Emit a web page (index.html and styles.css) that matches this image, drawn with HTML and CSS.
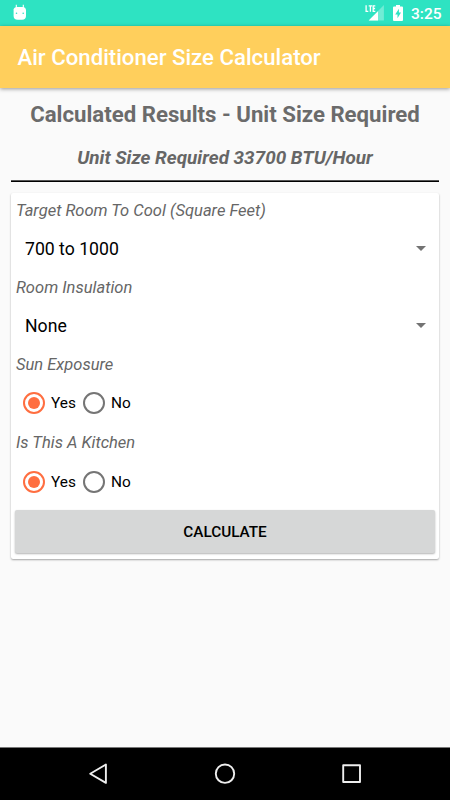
FILE: index.html
```html
<!DOCTYPE html>
<html lang="en">
<head>
<meta charset="utf-8">
<title>Air Conditioner Size Calculator</title>
<link rel="stylesheet" href="styles.css">
</head>
<body>
<div class="screen">
  <div class="status">
    <svg class="bot" width="14" height="17" viewBox="0 0 14 17">
      <path d="M3.3 4V.8M10.3 4V.8" stroke="#fff" stroke-width="1.1"/>
      <path d="M.6 5.6Q1 3.1 4 3.1h6q2.600 0 3 2.500V12q0 3.700-4 3.700H4.600q-4 0-4-3.700z" fill="#fff"/>
      <circle cx="3.500" cy="9.300" r=".8" fill="#2ee3c2"/><circle cx="10.200" cy="9.300" r=".8" fill="#2ee3c2"/>
    </svg>
    <svg class="signal" width="20" height="17" viewBox="0 0 20 17">
      <path d="M18.900 0v15.600H3.700z" fill="#fff" opacity=".32"/>
      <path d="M13 6.300v9.300H3.700z" fill="#fff"/>
      <path d="M1.100.3v6h2.200M3.700.9h3.400M5.400.9v5.900M10.300.9H8.200v5.400h2.100M8.200 3.500h1.900" fill="none" stroke="#fff" stroke-width="1.300"/>
    </svg>
    <svg class="battery" width="10" height="16" viewBox="0 0 10 16">
      <path d="M3 0h4v1.500h2q1 0 1 1V15q0 1-1 1H1q-1 0-1-1V2.500q0-1 1-1h2z" fill="#fff"/>
      <path d="M5.900 3.800L2.200 9.500h2.300v3.700l3.500-5.700H5.900z" fill="#2ee3c2"/>
    </svg>
    <span class="clock">3:25</span>
  </div>
  <header class="bar">Air Conditioner Size Calculator</header>
  <main class="content">
    <h1 class="heading">Calculated Results - Unit Size Required</h1>
    <p class="result">Unit Size Required 33700 BTU/Hour</p>
    <div class="rule"></div>
    <section class="card">
      <div class="label">Target Room To Cool (Square Feet)</div>
      <div class="spinner"><span>700 to 1000</span><i class="arrow"></i></div>
      <div class="label">Room Insulation</div>
      <div class="spinner"><span>None</span><i class="arrow"></i></div>
      <div class="label">Sun Exposure</div>
      <div class="radios">
        <i class="radio on"></i><span class="option">Yes</span>
        <i class="radio"></i><span class="option">No</span>
      </div>
      <div class="label">Is This A Kitchen</div>
      <div class="radios">
        <i class="radio on"></i><span class="option">Yes</span>
        <i class="radio"></i><span class="option">No</span>
      </div>
      <button class="calculate">CALCULATE</button>
    </section>
  </main>
  <nav class="nav">
    <svg width="310" height="53" viewBox="70 747 310 53" fill="none" stroke="#eee" stroke-width="1.900" stroke-linejoin="round">
      <path d="M105.900 764.500v18.400L90.200 773.700z"/>
      <circle cx="225" cy="773.700" r="9.200"/>
      <rect x="343.200" y="765.200" width="16.800" height="16.800"/>
    </svg>
  </nav>
</div>
</body>
</html>
```
FILE: styles.css
```css
* { box-sizing: border-box; margin: 0; padding: 0; }
body { font-family: Roboto, sans-serif; background: #fafafa; }
.screen { width: 450px; height: 800px; display: flex; flex-direction: column; overflow: hidden; }
.status { height: 26px; flex: none; background: #2ee3c2; display: flex; align-items: flex-start; padding: 0 9px 0 13px; }
.bot { margin-top: 4px; }
.signal { margin: 5px 0 0 auto; }
.battery { margin: 5px 0 0 8px; }
.clock { margin-left: 8px; width: 30px; font-size: 15.500px; line-height: 28px; font-weight: 500; color: #fff; white-space: nowrap; }
.bar { height: 62px; flex: none; background: #ffcf5c; color: #fff; font-size: 22.200px; font-weight: 500; line-height: 63px; padding-left: 17.500px; box-shadow: 0 1px 4px rgba(0,0,0,.4); }
.content { flex: 1; padding: 11px 11px 0; }
.heading { height: 30px; line-height: 30px; font-size: 22.200px; font-weight: 700; color: #6b6b6b; text-align: center; white-space: nowrap; }
.result { height: 51px; line-height: 58px; font-size: 18.900px; font-weight: 700; font-style: italic; color: #666; text-align: center; white-space: nowrap; }
.rule { height: 2px; background: linear-gradient(#555 50%, #000 50%); margin-bottom: 11px; }
.card { height: 366px; background: #fff; border-radius: 2px; padding: 5px 4px 0; box-shadow: 0 1px 2px rgba(0,0,0,.35); }
.label { height: 25px; line-height: 25px; padding-left: 1px; font-size: 16.530px; font-style: italic; color: #666; }
.spinner { height: 51.800px; display: flex; align-items: center; justify-content: space-between; padding: 0 9px 0 10px; font-size: 17.650px; color: #000; }
.arrow { border: 5.500px solid transparent; border-top-color: #737373; border-bottom: 0; }
.radios { height: 53.500px; display: flex; align-items: center; padding-left: 8px; }
.radio { width: 22px; height: 22px; border: 2px solid #757575; border-radius: 50%; display: flex; align-items: center; justify-content: center; }
.radio.on { border-color: #ff6e40; }
.radio.on::after { content: ""; width: 12px; height: 12px; flex: none; border-radius: 50%; background: #ff6e40; }
.option { width: 38px; padding-left: 6px; font-size: 15.400px; color: #000; }
.calculate { display: block; width: 420px; height: 43px; margin-top: 1.500px; border: 0; border-radius: 2px; background: #d6d7d7; box-shadow: 0 1px 2px rgba(0,0,0,.3); font: 500 15.300px Roboto, sans-serif; color: #000; }
.nav { height: 53px; flex: none; background: #000; border-top: 1px solid #777; padding-left: 70px; }
.nav svg { display: block; margin-top: -1px; }
```
